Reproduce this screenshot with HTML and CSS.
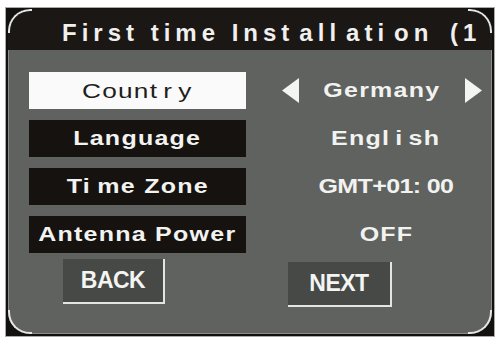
FILE: index.html
```html
<!DOCTYPE html>
<html>
<head>
<meta charset="utf-8">
<link rel="stylesheet" href="styles.css">
</head>
<body>
<div class="device">
  <div class="panel">
    <div class="header"><span class="title">First time Inst<span class="tgap">al</span>l<span class="tgap">at</span>i<span class="tgap">on</span> <span class="tgap">(1</span></span></div>
    <div class="body">
      <div class="rows">
        <div class="label selected"><span class="wide">Count<span class="gap">r</span>y</span></div>
        <div class="value chooser">
          <svg class="arrow" width="18" height="25" viewBox="0 0 18 25"><polygon points="17,0 17,25 0,12.5" /></svg>
          <span class="wide">Germany</span>
          <svg class="arrow" width="18" height="25" viewBox="0 0 18 25"><polygon points="1,0 1,25 18,12.5" /></svg>
        </div>

        <div class="label"><span class="wide">Language</span></div>
        <div class="value"><span class="wide">Engl<span class="gap">i</span>sh</span></div>

        <div class="label"><span class="wide">Ti<span class="lgap">m</span>e Zone</span></div>
        <div class="value"><span class="wide tight">GMT+01:<span class="lgap">0</span>0</span></div>

        <div class="label"><span class="wide">Antenna Power</span></div>
        <div class="value"><span class="wide">OFF</span></div>
      </div>
      <div class="buttons">
        <div class="btn">BACK</div>
        <div class="btn next">NEXT</div>
      </div>
    </div>
    <div class="corner tl"></div>
    <div class="corner tr"></div>
    <div class="corner bl"></div>
    <div class="corner br"></div>
  </div>
</div>
</body>
</html>
```
FILE: styles.css
```css
html, body {
  margin: 0;
  padding: 0;
  background: #ffffff;
}

body {
  font-family: "Liberation Sans", Arial, sans-serif;
}

.device {
  margin: 7px 0 0 5px;
  width: 490px;
  height: 330px;
  box-sizing: border-box;
  border: 1px solid #a9aaa8;
  background: #121110;
  padding: 1px 2px 2px 2px;
}

.panel {
  position: relative;
  height: 100%;
  border-radius: 22px;
  overflow: hidden;
  background: #5f625e;
  display: flex;
  flex-direction: column;
  box-shadow: inset 1px 0 0 #8c8e8a, inset -1px 0 0 #8c8e8a, inset 0 -1px 0 #8c8e8a;
}

.header {
  height: 41px;
  flex: none;
  background: #1b1714;
  padding-left: 54px;
  box-sizing: border-box;
  padding-top: 12px;
  white-space: nowrap;
}

.title {
  color: #f0f0ee;
  font-weight: bold;
  font-size: 24px;
  line-height: 24px;
  letter-spacing: 5px;
}

.tgap {
  margin-left: 5px;
}

.body {
  padding: 22px 0 0 21px;
}

.rows {
  display: grid;
  grid-template-columns: 217px 1fr;
  grid-auto-rows: 37px;
  row-gap: 11px;
}

.label {
  background: #15120f;
  color: #f2f2f0;
  display: flex;
  align-items: center;
  justify-content: center;
  font-size: 20px;
  font-weight: bold;
}

.label.selected {
  background: #fafafa;
  color: #1e1e1e;
  font-weight: normal;
  font-size: 21px;
}

.wide {
  display: inline-block;
  transform: scaleX(1.25);
  letter-spacing: 1px;
}

.tight {
  letter-spacing: -0.5px;
}

.gap {
  margin: 0 4px;
}

.lgap {
  margin-left: 5px;
}

.value {
  display: flex;
  align-items: center;
  justify-content: center;
  color: #f2f2f0;
  font-size: 20px;
  font-weight: bold;
  padding-left: 34px;
  padding-right: 0;
}

.value.chooser {
  justify-content: space-between;
  padding-left: 36px;
  padding-right: 10px;
}

.arrow {
  fill: #f4f4f2;
}

.buttons {
  display: flex;
  gap: 123px;
  margin-top: 6px;
  padding-left: 34px;
}

.btn {
  width: 100px;
  height: 43px;
  background: #464946;
  border-right: 2px solid #e4e4e2;
  border-bottom: 2px solid #e4e4e2;
  color: #f4f4f2;
  font-size: 23px;
  font-weight: bold;
  letter-spacing: -0.5px;
  display: flex;
  align-items: center;
  justify-content: center;
}

.btn.next {
  width: 102px;
  margin-top: 3px;
}

.corner {
  position: absolute;
  width: 24px;
  height: 24px;
  box-sizing: border-box;
  border-color: #e6e6e4;
  border-style: solid;
  border-width: 0;
}

.tl {
  top: 0;
  left: 0;
  border-top-width: 2px;
  border-left-width: 2px;
  border-top-left-radius: 22px;
}

.tr {
  top: 0;
  right: 0;
  border-top-width: 2px;
  border-right-width: 2px;
  border-top-right-radius: 22px;
}

.bl {
  bottom: 0;
  left: 0;
  border-bottom-width: 2px;
  border-left-width: 2px;
  border-bottom-left-radius: 22px;
}

.br {
  bottom: 0;
  right: 0;
  border-bottom-width: 2px;
  border-right-width: 2px;
  border-bottom-right-radius: 22px;
}
```
